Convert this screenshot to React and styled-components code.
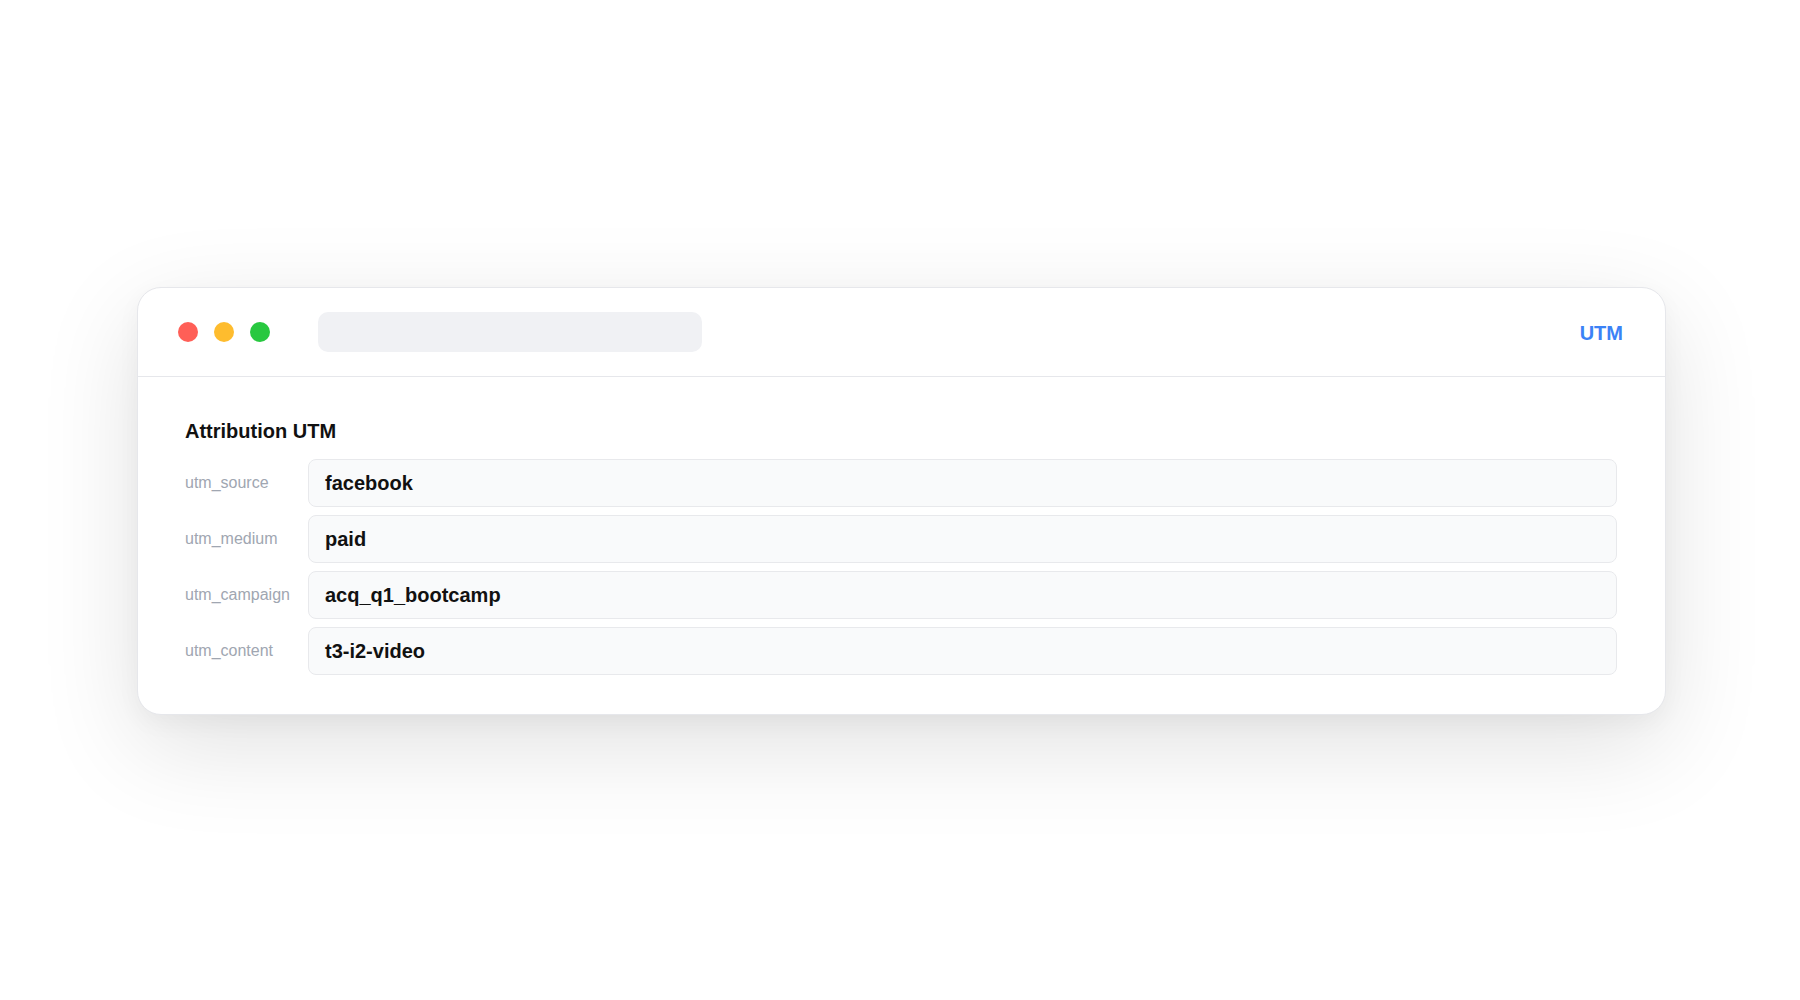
import styled, { createGlobalStyle } from "styled-components"

const GlobalStyle = createGlobalStyle`
    * { box-sizing: border-box; }
    html, body {
        margin: 0;
        padding: 0;
        background: #ffffff;
        font-family: "Liberation Sans", Arial, Helvetica, sans-serif;
    }
`

const fields = [
    { key: "utm_source", value: "facebook" },
    { key: "utm_medium", value: "paid" },
    { key: "utm_campaign", value: "acq_q1_bootcamp" },
    { key: "utm_content", value: "t3-i2-video" },
]

function App(){
    return (
        <>
            <GlobalStyle />
            <Page>
                <Window>
                    <TitleBar>
                        <Lights>
                            <Light color="#ff5f57" />
                            <Light color="#febc2e" />
                            <Light color="#28c840" />
                        </Lights>
                        <AddressBar />
                        <Tag>UTM</Tag>
                    </TitleBar>
                    <Body>
                        <Heading>Attribution UTM</Heading>
                        <FieldList>
                            {fields.map(({key, value}) => (
                                <FieldRow key={key}>
                                    <FieldLabel>{key}</FieldLabel>
                                    <FieldValue>{value}</FieldValue>
                                </FieldRow>
                            ))}
                        </FieldList>
                    </Body>
                </Window>
            </Page>
        </>
    )
}

const Page = styled.div`
    min-height: 100vh;
    display: flex;
    align-items: center;
    justify-content: center;
    padding: 2px 134px 0 137px;
`

const Window = styled.div`
    width: 100%;
    background: #ffffff;
    border: 1px solid #e6e7eb;
    border-radius: 24px;
    box-shadow: 0 30px 100px rgba(0, 0, 0, 0.12), 0 8px 24px rgba(0, 0, 0, 0.04);
    overflow: hidden;
`

const TitleBar = styled.div`
    height: 89px;
    display: flex;
    align-items: center;
    padding: 0 42px 0 40px;
    border-bottom: 1px solid #e6e7eb;
`

const Lights = styled.div`
    display: flex;
    gap: 16px;
`

const Light = styled.span`
    width: 20px;
    height: 20px;
    border-radius: 50%;
    background: ${props => props.color};
`

const AddressBar = styled.div`
    width: 384px;
    height: 40px;
    margin-left: 48px;
    border-radius: 10px;
    background: #f0f1f4;
`

const Tag = styled.span`
    margin-left: auto;
    padding-top: 3px;
    font-size: 20px;
    font-weight: 700;
    color: #3b82f6;
`

const Body = styled.div`
    padding: 42px 48px 39px 47px;
`

const Heading = styled.h2`
    margin: 0 0 16px;
    font-size: 20px;
    line-height: 24px;
    font-weight: 700;
    color: #111111;
`

const FieldList = styled.div`
    display: flex;
    flex-direction: column;
    gap: 8px;
`

const FieldRow = styled.div`
    display: flex;
    align-items: center;
    gap: 12px;
`

const FieldLabel = styled.span`
    width: 111px;
    flex-shrink: 0;
    font-size: 16px;
    color: #a0a6b1;
`

const FieldValue = styled.div`
    flex: 1;
    height: 48px;
    display: flex;
    align-items: center;
    padding: 0 16px;
    background: #f9fafb;
    border: 1px solid #e8e9ec;
    border-radius: 8px;
    font-size: 20px;
    font-weight: 700;
    color: #111111;
`

export default App
